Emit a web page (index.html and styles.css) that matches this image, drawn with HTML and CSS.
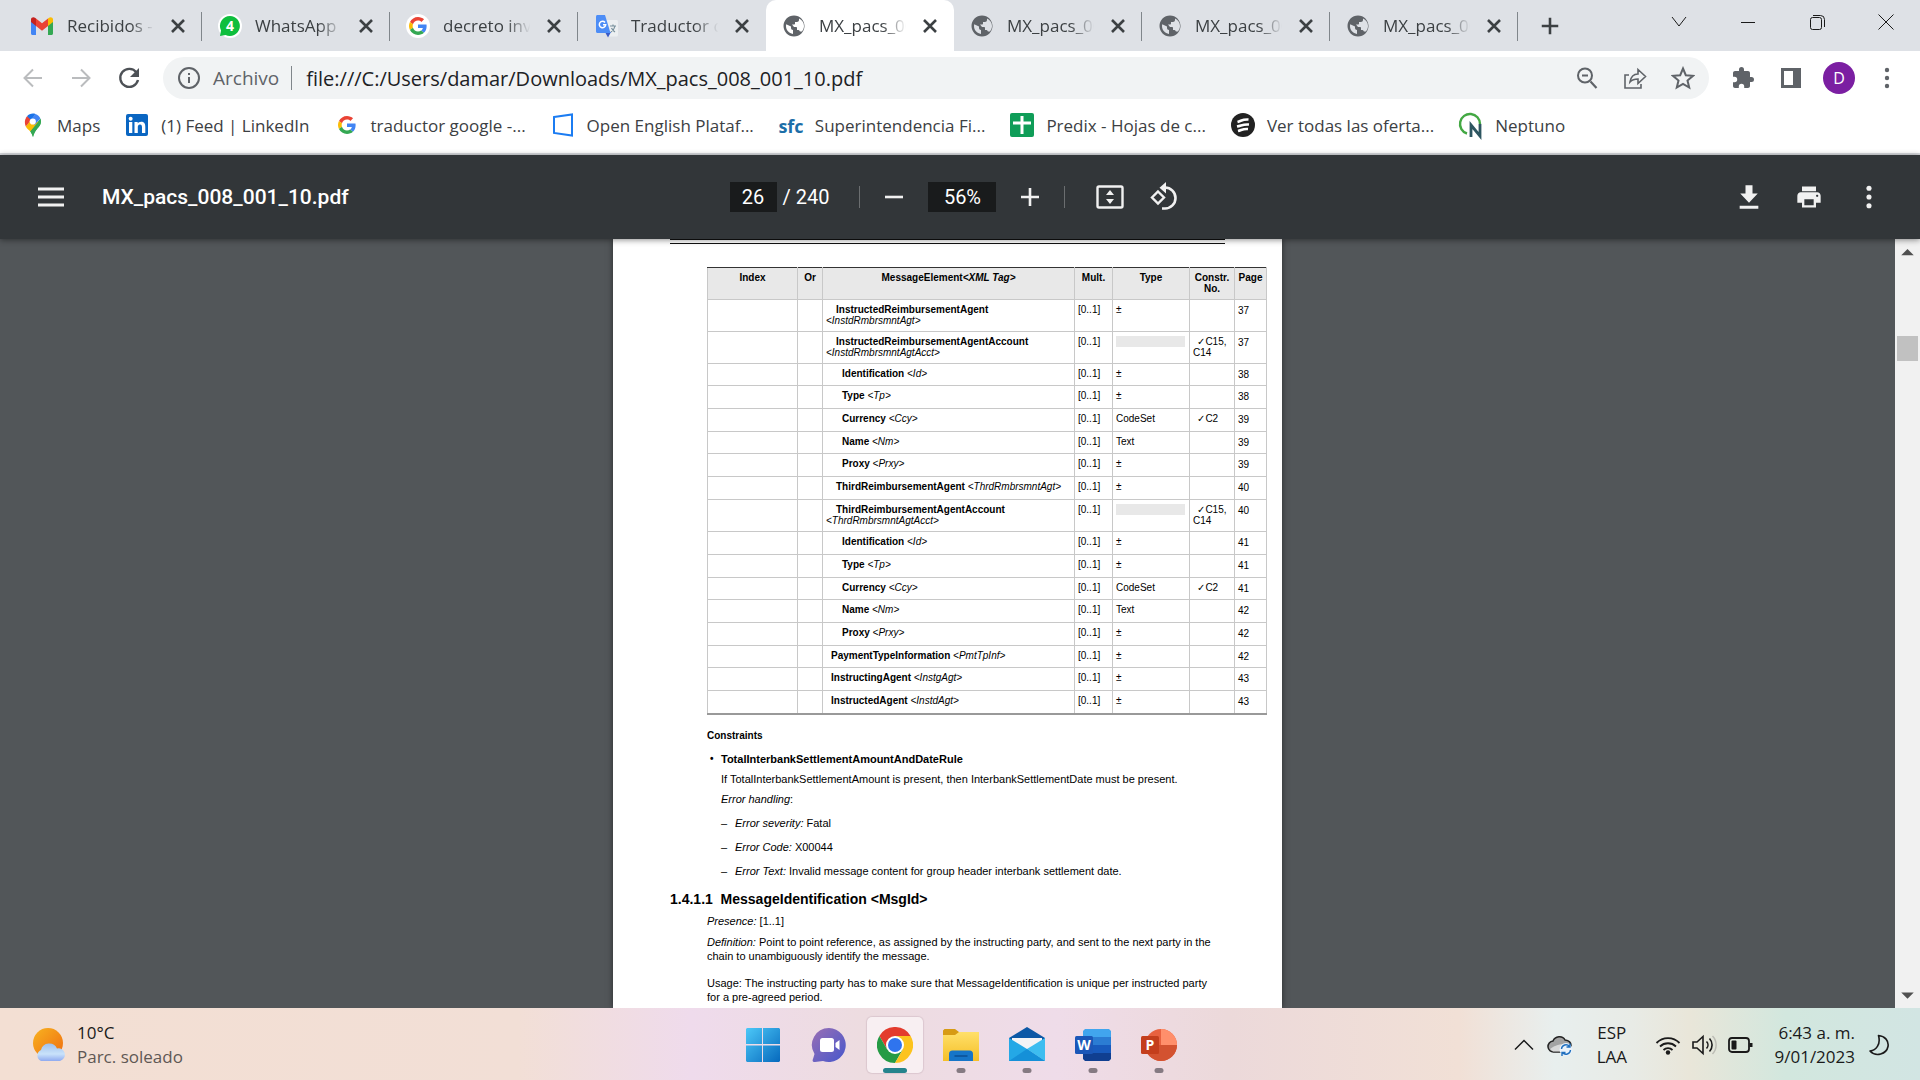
FILE: index.html
```html
<!DOCTYPE html>
<html lang="es">
<head>
<meta charset="utf-8">
<meta name="viewport" content="width=device-width, initial-scale=1">
<title>MX_pacs_008_001_10.pdf</title>
<link rel="stylesheet" href="styles.css">
</head>
<body>
<svg class="sprite" aria-hidden="true">
  <symbol id="x" viewBox="0 0 24 24"><path d="M6 6L18 18M18 6L6 18" fill="none" stroke="#3c4043" stroke-width="2.6"/></symbol>
  <symbol id="globe" viewBox="0 0 24 24"><path fill="#5f6368" d="M12 1.500C6.200 1.500 1.500 6.200 1.500 12s4.700 10.500 10.500 10.500 10.500-4.700 10.500-10.500S17.800 1.500 12 1.500zm-1 18.430c-3.950-.49-7-3.850-7-7.930 0-.62.080-1.210.210-1.790L9 12.500v1.500c0 1.100.9 2 2 2v3.930zm6.900-2.540c-.26-.81-1-1.390-1.900-1.390h-1v-2c0-.55-.45-1-1-1h-2l-2-2.500h2c.55 0 1-.45 1-1V8h2c1.100 0 2-.9 2-2v-1.410c2.930 1.190 5 4.060 5 7.410 0 2.080-.8 3.970-2.100 5.390z"/></symbol>
  <symbol id="google" viewBox="0 0 48 48"><path fill="#ea4335" d="M24 9.500c3.540 0 6.710 1.220 9.210 3.600l6.850-6.850C35.900 2.380 30.470 0 24 0 14.620 0 6.510 5.380 2.560 13.220l7.980 6.190C12.430 13.720 17.740 9.500 24 9.500z"/><path fill="#4285f4" d="M46.980 24.550c0-1.570-.15-3.090-.38-4.550H24v9.020h12.940c-.58 2.960-2.260 5.480-4.780 7.180l7.730 6c4.510-4.180 7.090-10.360 7.090-17.650z"/><path fill="#fbbc05" d="M10.530 28.590c-.48-1.450-.76-2.990-.76-4.590s.27-3.140.76-4.590l-7.980-6.190C.92 16.460 0 20.120 0 24c0 3.880.92 7.540 2.560 10.780l7.970-6.190z"/><path fill="#34a853" d="M24 48c6.480 0 11.930-2.130 15.890-5.810l-7.730-6c-2.150 1.450-4.920 2.300-8.160 2.300-6.260 0-11.570-4.220-13.470-9.910l-7.980 6.190C6.510 42.620 14.620 48 24 48z"/></symbol>
</svg>

<header class="browser">
  <div class="tabstrip">
    <div class="tabs">
      <div class="tab">
        <svg class="favicon" viewBox="0 0 24 24"><path fill="#4285f4" d="M1 5v14.500c0 .8.700 1.500 1.500 1.500H6V10z"/><path fill="#34a853" d="M18 10v11h3.500c.8 0 1.500-.7 1.500-1.500V5z"/><path fill="#ea4335" d="M6 4.500l6 4.700 6-4.700V12l-6 4.700L6 12z"/><path fill="#c5221f" d="M1 5.500C1 3.300 3.500 2.500 5 3.700l1 .8V12L1 8z"/><path fill="#fbbc04" d="M23 5.500c0-2.200-2.500-3-4-1.800l-1 .8V12l5-4z"/></svg>
        <span class="tab-title">Recibidos -</span><button class="tab-close" aria-label="Cerrar"><svg viewBox="0 0 24 24"><use href="#x"/></svg></button>
      </div>
      <div class="tab">
        <svg class="favicon" viewBox="0 0 24 24"><circle cx="12" cy="12" r="12" fill="#fff"/><path fill="#0ebe3d" d="M12 2a10 10 0 1 1-4.500 19L2 22l1-5.500A10 10 0 0 1 12 2z"/><text x="12" y="17" text-anchor="middle" class="badge-four">4</text></svg>
        <span class="tab-title">WhatsApp</span><button class="tab-close" aria-label="Cerrar"><svg viewBox="0 0 24 24"><use href="#x"/></svg></button>
      </div>
      <div class="tab">
        <svg class="favicon" viewBox="0 0 24 24"><circle cx="12" cy="12" r="12" fill="#fff"/><use href="#google" x="3" y="3" width="18" height="18"/></svg>
        <span class="tab-title">decreto inve</span><button class="tab-close" aria-label="Cerrar"><svg viewBox="0 0 24 24"><use href="#x"/></svg></button>
      </div>
      <div class="tab no-rule">
        <svg class="favicon" viewBox="0 0 24 24"><path fill="#eceff1" d="M12 6h10.500c.8 0 1.500.7 1.500 1.500V21c0 .8-.7 1.500-1.500 1.500H15z"/><path fill="#3a5bc7" d="M11 18h6l-3 5.500z"/><path fill="#4d8df6" d="M3.500 1H11l5.500 18h-13C2.600 19 2 18.400 2 17.500v-15C2 1.600 2.600 1 3.500 1z"/><path d="M11 8.500a3.200 3.200 0 1 0 .7 2.300H9" fill="none" stroke="#fff" stroke-width="1.500"/><path d="M16 12h6M19 10.500V12M21 12c-.5 3-2 4.500-4 6M17.500 14c1 2 2 3 3.500 4" fill="none" stroke="#78909c" stroke-width="1.200"/></svg>
        <span class="tab-title">Traductor d</span><button class="tab-close" aria-label="Cerrar"><svg viewBox="0 0 24 24"><use href="#x"/></svg></button>
      </div>
      <div class="tab active">
        <svg class="favicon" viewBox="0 0 24 24"><use href="#globe"/></svg>
        <span class="tab-title">MX_pacs_00</span><button class="tab-close" aria-label="Cerrar"><svg viewBox="0 0 24 24"><use href="#x"/></svg></button>
      </div>
      <div class="tab">
        <svg class="favicon" viewBox="0 0 24 24"><use href="#globe"/></svg>
        <span class="tab-title">MX_pacs_00</span><button class="tab-close" aria-label="Cerrar"><svg viewBox="0 0 24 24"><use href="#x"/></svg></button>
      </div>
      <div class="tab">
        <svg class="favicon" viewBox="0 0 24 24"><use href="#globe"/></svg>
        <span class="tab-title">MX_pacs_00</span><button class="tab-close" aria-label="Cerrar"><svg viewBox="0 0 24 24"><use href="#x"/></svg></button>
      </div>
      <div class="tab">
        <svg class="favicon" viewBox="0 0 24 24"><use href="#globe"/></svg>
        <span class="tab-title">MX_pacs_00</span><button class="tab-close" aria-label="Cerrar"><svg viewBox="0 0 24 24"><use href="#x"/></svg></button>
      </div>
      <button class="new-tab" aria-label="Nueva pestaña"><svg viewBox="0 0 24 24"><path d="M12 3v18M3 12h18" stroke="#3c4043" stroke-width="2.800"/></svg></button>
    </div>
    <div class="window-controls">
      <button aria-label="Buscar pestañas"><svg viewBox="0 0 20 20"><path d="M3 5l7 9 7-9"/></svg></button>
      <button aria-label="Minimizar"><svg viewBox="0 0 20 20"><path d="M3 10.500h14"/></svg></button>
      <button aria-label="Restaurar"><svg viewBox="0 0 20 20"><rect x="3.500" y="5.500" width="11" height="12" rx="2"/><path d="M6 3.500h7.500a4 4 0 0 1 4 4V15"/></svg></button>
      <button aria-label="Cerrar ventana"><svg viewBox="0 0 20 20"><path d="M2.500 2.500l15 15M17.500 2.500l-15 15"/></svg></button>
    </div>
  </div>

  <div class="navbar">
    <div class="nav-buttons">
      <button class="icon-btn" aria-label="Atrás"><svg viewBox="0 0 24 24"><path d="M21 12H4M12 3.500L3.500 12l8.500 8.500" fill="none" stroke="#babcbe" stroke-width="2"/></svg></button>
      <button class="icon-btn" aria-label="Adelante"><svg viewBox="0 0 24 24"><path d="M3 12h17M12 3.500l8.500 8.500-8.500 8.500" fill="none" stroke="#babcbe" stroke-width="2"/></svg></button>
      <button class="icon-btn" aria-label="Volver a cargar"><svg viewBox="0 0 24 24"><path d="M19.500 6.500A9 9 0 1 0 21 14" fill="none" stroke="#4d5156" stroke-width="2.400"/><path d="M22 2v9h-9z" fill="#4d5156"/></svg></button>
    </div>
    <div class="omnibox">
      <svg class="info" viewBox="0 0 24 24"><circle cx="12" cy="12" r="10" fill="none" stroke="#5f6368" stroke-width="2"/><path d="M12 11v6M12 7v2" stroke="#5f6368" stroke-width="2"/></svg>
      <label class="scheme" for="url">Archivo</label>
      <input id="url" class="url" type="text" value="file:///C:/Users/damar/Downloads/MX_pacs_008_001_10.pdf">
      <button class="icon-btn" aria-label="Zoom"><svg viewBox="0 0 24 24"><path d="M15.500 15.500L21.500 22M7 9.500h6" stroke="#5f6368" stroke-width="2.200"/><circle cx="10" cy="9.500" r="7" fill="none" stroke="#5f6368" stroke-width="2"/></svg></button>
      <button class="icon-btn" aria-label="Compartir"><svg viewBox="0 0 24 24"><path d="M6 9H2v13h16v-4M7 16c.8-5 4-8 8-8V3.500l7.500 7-7.500 7V13c-3.500 0-6 .8-8 3z" fill="none" stroke="#5f6368" stroke-width="1.600"/></svg></button>
      <button class="icon-btn" aria-label="Favorito"><svg viewBox="0 0 24 24"><path d="M12 2.500l2.800 6.700 7.200.6-5.500 4.700 1.700 7-6.200-3.700-6.200 3.700 1.700-7L2 9.800l7.200-.6z" fill="none" stroke="#5f6368" stroke-width="2"/></svg></button>
    </div>
    <div class="nav-buttons">
      <button class="icon-btn" aria-label="Extensiones"><svg viewBox="0 0 24 24"><path fill="#5f6368" d="M20.500 11H19V7c0-1.100-.9-2-2-2h-4V3.500a2.500 2.500 0 0 0-5 0V5H4c-1.100 0-2 .9-2 2v3.800h1.500a2.700 2.700 0 0 1 0 5.400H2V20c0 1.100.9 2 2 2h3.800v-1.500a2.700 2.700 0 0 1 5.400 0V22H17c1.100 0 2-.9 2-2v-4h1.500a2.500 2.500 0 0 0 0-5z"/></svg></button>
      <button class="icon-btn" aria-label="Panel lateral"><svg viewBox="0 0 24 24"><path fill="#5f6368" fill-rule="evenodd" d="M2 2h20v20H2zM5 5v14h9V5z"/></svg></button>
      <button class="icon-btn" aria-label="Perfil"><span class="avatar">D</span></button>
      <button class="icon-btn" aria-label="Menú"><svg viewBox="0 0 24 24" fill="#5f6368"><circle cx="12" cy="4" r="2.200"/><circle cx="12" cy="12" r="2.200"/><circle cx="12" cy="20" r="2.200"/></svg></button>
    </div>
  </div>

  <nav class="bookmarks">
    <a href="#maps"><svg viewBox="0 0 24 24"><path fill="#34a853" d="M19.400 5.500c1.500 4-.4 7.500-3.400 10.500-2 2-3.200 5-4 8-.8-2.500-1.700-4.300-2.700-5.500z"/><path fill="#fbbc04" d="M4.800 13.500L9 8l10 1-9.700 9.500c-1.500-1.500-3.500-3-4.500-5z"/><path fill="#34a853" d="M9.300 18.500L19.500 6c1.300 4-.5 7-3.500 10-2 2-3.200 5-4 8-.8-2.500-1.700-4.300-2.700-5.500z"/><path fill="#4285f4" d="M14.500 1c2.200.7 4 2.400 4.900 4.500L13.500 12 9 7z"/><path fill="#1a73e8" d="M6 3.200C8 .8 11.500 0 14.500 1L9 8z"/><path fill="#ea4335" d="M6 3.200L10 7l-5.200 6.500C3 9.500 4 5.800 6 3.200z"/><circle cx="11.800" cy="8.500" r="3.100" fill="#fff"/></svg><span>Maps</span></a>
    <a href="#linkedin"><svg viewBox="0 0 24 24"><rect x="1" y="1" width="22" height="22" rx="2" fill="#0a66c2"/><path fill="#fff" d="M4 9h3.300v11H4z"/><circle cx="5.650" cy="5.700" r="2" fill="#fff"/><path fill="#fff" d="M9.500 9h3.200v1.500c.6-1 1.800-1.800 3.500-1.800 3.300 0 4.100 2.100 4.100 5.200V20H17v-5.500c0-1.500-.2-3-2-3s-2.200 1.400-2.200 2.900V20H9.500z"/></svg><span>(1) Feed | LinkedIn</span></a>
    <a href="#traductor"><svg viewBox="0 0 24 24"><use href="#google" x="3" y="3" width="18" height="18"/></svg><span>traductor google -...</span></a>
    <a href="#openenglish"><svg viewBox="0 0 24 24"><path d="M3 4l18-2.500v21L3 20z" fill="none" stroke="#1b7cf2" stroke-width="2"/></svg><span>Open English Plataf...</span></a>
    <a href="#sfc"><svg viewBox="0 0 24 24"><text x="12" y="20" text-anchor="middle" class="sfc">sfc</text></svg><span>Superintendencia Fi...</span></a>
    <a href="#predix"><svg viewBox="0 0 24 24"><rect width="24" height="24" rx="2" fill="#0f9d58"/><path d="M12 3v18M3 10h18" stroke="#fff" stroke-width="3"/></svg><span>Predix - Hojas de c...</span></a>
    <a href="#ofertas"><svg viewBox="0 0 24 24"><circle cx="12" cy="12" r="12" fill="#222"/><path d="M6.500 9c4-1 5-3 11-2.500M6 13.500c5-1 6-2.500 12-2M7 18c4-1 5-2.500 10-2" fill="none" stroke="#fff" stroke-width="2.600"/></svg><span>Ver todas las oferta...</span></a>
    <a href="#neptuno"><svg viewBox="0 0 24 24"><path d="M8 20.500A10 10 0 1 1 21 11" fill="none" stroke="#43a843" stroke-width="2.400"/><path d="M12 24V12l9 11V11" fill="none" stroke="#2d5560" stroke-width="2.800"/></svg><span>Neptuno</span></a>
  </nav>
</header>

<section class="pdf-bar">
  <div class="pdf-left">
    <button class="menu" aria-label="Menú"><svg viewBox="0 0 26 20"><path d="M0 2h26M0 10h26M0 18h26" stroke="#f1f1f1" stroke-width="3"/></svg></button>
    <span class="pdf-title">MX_pacs_008_001_10.pdf</span>
  </div>
  <div class="pdf-center">
    <input class="box page-no" type="text" value="26" aria-label="Página">
    <span class="page-total">/ 240</span>
    <span class="rule"></span>
    <button class="pdf-btn" aria-label="Alejar"><svg viewBox="0 0 24 24"><path d="M3 12h18" stroke="#f1f1f1" stroke-width="2.600"/></svg></button>
    <input class="box zoom-no" type="text" value="56%" aria-label="Nivel de zoom">
    <button class="pdf-btn" aria-label="Acercar"><svg viewBox="0 0 24 24"><path d="M3 12h18M12 3v18" stroke="#f1f1f1" stroke-width="2.600"/></svg></button>
    <span class="rule"></span>
    <button class="pdf-btn wide" aria-label="Ajustar a la página"><svg viewBox="0 0 30 30"><rect x="2.500" y="4.500" width="25" height="21" rx="1.500" fill="none" stroke="#f1f1f1" stroke-width="2.400"/><path fill="#f1f1f1" d="M15 8l4 5h-8zM15 22l4-5h-8z"/></svg></button>
    <button class="pdf-btn wide" aria-label="Girar"><svg viewBox="0 0 30 30"><path d="M9 9.500L15 15.500 9 21.500 3 15.500z" fill="none" stroke="#f1f1f1" stroke-width="2.400"/><path d="M13 5.500h3a10.500 10.500 0 0 1 0 21h-3" fill="none" stroke="#f1f1f1" stroke-width="2.600"/><path fill="#f1f1f1" d="M17 0v11.500L10.500 5.700z"/></svg></button>
  </div>
  <div class="pdf-right">
    <button class="pdf-act" aria-label="Descargar"><svg viewBox="0 0 24 24"><path fill="#f1f1f1" d="M19.500 9H15V2H9v7H4.500L12 17zM4 19.500V22h16v-2.500z"/></svg></button>
    <button class="pdf-act" aria-label="Imprimir"><svg viewBox="0 0 24 24"><path fill="#f1f1f1" fill-rule="evenodd" d="M19 8H5c-1.660 0-3 1.340-3 3v6h4v4h12v-4h4v-6c0-1.660-1.340-3-3-3zm-3 11H8v-5h8v5zm3-7c-.55 0-1-.45-1-1s.45-1 1-1 1 .45 1 1-.45 1-1 1zM18 3H6v4h12z"/></svg></button>
    <button class="pdf-act" aria-label="Más opciones"><svg viewBox="0 0 24 24" fill="#f1f1f1"><circle cx="12" cy="4.500" r="2.200"/><circle cx="12" cy="12" r="2.200"/><circle cx="12" cy="19.500" r="2.200"/></svg></button>
  </div>
</section>

<main class="viewer">
  <div class="canvas">
    <article class="page">
      <div class="page-head"></div>
      <div class="indent">
        <table class="elements">
          <colgroup><col class="c-index"><col class="c-or"><col class="c-element"><col class="c-mult"><col class="c-type"><col class="c-constr"><col class="c-page"></colgroup>
          <thead><tr><th>Index</th><th>Or</th><th>MessageElement<i>&lt;XML Tag&gt;</i></th><th>Mult.</th><th>Type</th><th>Constr. No.</th><th>Page</th></tr></thead>
          <tbody>
            <tr class="tall"><td></td><td></td><td class="l2"><b>InstructedReimbursementAgent</b><br><i>&lt;InstdRmbrsmntAgt&gt;</i></td><td>[0..1]</td><td>±</td><td></td><td>37</td></tr>
            <tr class="tall"><td></td><td></td><td class="l2"><b>InstructedReimbursementAgentAccount</b><br><i>&lt;InstdRmbrsmntAgtAcct&gt;</i></td><td>[0..1]</td><td><span class="blank"></span></td><td><span class="check">✓</span>C15, C14</td><td>37</td></tr>
            <tr><td></td><td></td><td class="l3"><b>Identification</b> <i>&lt;Id&gt;</i></td><td>[0..1]</td><td>±</td><td></td><td>38</td></tr>
            <tr><td></td><td></td><td class="l3"><b>Type</b> <i>&lt;Tp&gt;</i></td><td>[0..1]</td><td>±</td><td></td><td>38</td></tr>
            <tr><td></td><td></td><td class="l3"><b>Currency</b> <i>&lt;Ccy&gt;</i></td><td>[0..1]</td><td>CodeSet</td><td><span class="check">✓</span>C2</td><td>39</td></tr>
            <tr><td></td><td></td><td class="l3"><b>Name</b> <i>&lt;Nm&gt;</i></td><td>[0..1]</td><td>Text</td><td></td><td>39</td></tr>
            <tr><td></td><td></td><td class="l3"><b>Proxy</b> <i>&lt;Prxy&gt;</i></td><td>[0..1]</td><td>±</td><td></td><td>39</td></tr>
            <tr><td></td><td></td><td class="l2"><b>ThirdReimbursementAgent</b> <i>&lt;ThrdRmbrsmntAgt&gt;</i></td><td>[0..1]</td><td>±</td><td></td><td>40</td></tr>
            <tr class="tall"><td></td><td></td><td class="l2"><b>ThirdReimbursementAgentAccount</b><br><i>&lt;ThrdRmbrsmntAgtAcct&gt;</i></td><td>[0..1]</td><td><span class="blank"></span></td><td><span class="check">✓</span>C15, C14</td><td>40</td></tr>
            <tr><td></td><td></td><td class="l3"><b>Identification</b> <i>&lt;Id&gt;</i></td><td>[0..1]</td><td>±</td><td></td><td>41</td></tr>
            <tr><td></td><td></td><td class="l3"><b>Type</b> <i>&lt;Tp&gt;</i></td><td>[0..1]</td><td>±</td><td></td><td>41</td></tr>
            <tr><td></td><td></td><td class="l3"><b>Currency</b> <i>&lt;Ccy&gt;</i></td><td>[0..1]</td><td>CodeSet</td><td><span class="check">✓</span>C2</td><td>41</td></tr>
            <tr><td></td><td></td><td class="l3"><b>Name</b> <i>&lt;Nm&gt;</i></td><td>[0..1]</td><td>Text</td><td></td><td>42</td></tr>
            <tr><td></td><td></td><td class="l3"><b>Proxy</b> <i>&lt;Prxy&gt;</i></td><td>[0..1]</td><td>±</td><td></td><td>42</td></tr>
            <tr><td></td><td></td><td class="l1"><b>PaymentTypeInformation</b> <i>&lt;PmtTpInf&gt;</i></td><td>[0..1]</td><td>±</td><td></td><td>42</td></tr>
            <tr><td></td><td></td><td class="l1"><b>InstructingAgent</b> <i>&lt;InstgAgt&gt;</i></td><td>[0..1]</td><td>±</td><td></td><td>43</td></tr>
            <tr><td></td><td></td><td class="l1"><b>InstructedAgent</b> <i>&lt;InstdAgt&gt;</i></td><td>[0..1]</td><td>±</td><td></td><td>43</td></tr>
          </tbody>
        </table>
        <h3 class="constraints">Constraints</h3>
        <ul class="rules">
          <li>
            <b class="rule-name">TotalInterbankSettlementAmountAndDateRule</b>
            <p>If TotalInterbankSettlementAmount is present, then InterbankSettlementDate must be present.</p>
            <p><i>Error handling</i>:</p>
            <ul class="errors">
              <li><i>Error severity:</i> Fatal</li>
              <li><i>Error Code:</i> X00044</li>
              <li><i>Error Text:</i> Invalid message content for group header interbank settlement date.</li>
            </ul>
          </li>
        </ul>
      </div>
      <h2 class="section">1.4.1.1&nbsp; MessageIdentification &lt;MsgId&gt;</h2>
      <div class="indent prose">
        <p><i>Presence:</i> [1..1]</p>
        <p><i>Definition:</i> Point to point reference, as assigned by the instructing party, and sent to the next party in the<br>chain to unambiguously identify the message.</p>
        <p class="usage">Usage: The instructing party has to make sure that MessageIdentification is unique per instructed party<br>for a pre-agreed period.</p>
      </div>
    </article>
  </div>
  <div class="scrollbar">
    <svg viewBox="0 0 24 24"><path fill="#505050" d="M12 9.500l6 6H6z"/></svg>
    <div class="track"><div class="thumb"></div></div>
    <svg viewBox="0 0 24 24"><path fill="#505050" d="M12 15l6-6H6z"/></svg>
  </div>
</main>

<footer class="taskbar">
  <div class="weather">
    <svg viewBox="0 0 36 36">
      <defs>
        <linearGradient id="sun" x1="0" y1="0" x2="1" y2="1"><stop offset="0" stop-color="#f8b320"/><stop offset="1" stop-color="#ef6c10"/></linearGradient>
        <linearGradient id="cloud" x1="0" y1="0" x2="0" y2="1"><stop offset="0" stop-color="#9fc0ec"/><stop offset=".6" stop-color="#c9e2fa"/><stop offset="1" stop-color="#8faaf0"/></linearGradient>
      </defs>
      <circle cx="16" cy="16" r="15" fill="url(#sun)"/><path fill="url(#cloud)" d="M9 34a6 6 0 0 1 0-11 8.500 8.500 0 0 1 16-1.500A6.300 6.300 0 0 1 28 34z"/></svg>
    <div><div class="temp">10°C</div><div class="cond">Parc. soleado</div></div>
  </div>
  <div class="apps">
    <button aria-label="Inicio"><svg viewBox="0 0 36 36"><defs><linearGradient id="win" x1="0" y1="0" x2="1" y2="1"><stop offset="0" stop-color="#4cc8f8"/><stop offset="1" stop-color="#0669bd"/></linearGradient></defs><path fill="url(#win)" d="M2 1h15v16H1V2zM18 1h16l1 1v15H18zM1 18.500h16V35H2l-1-1zM18 18.500h17V34l-1 1H18z"/></svg></button>
    <button aria-label="Chat"><svg viewBox="0 0 36 36"><defs><linearGradient id="chat" x1="0" y1="0" x2="1" y2="1"><stop offset="0" stop-color="#9a6fb4"/><stop offset="1" stop-color="#4657cc"/></linearGradient></defs><path fill="url(#chat)" d="M18 1a17 17 0 1 1-6 33l-8 1c-2 0-3-1-2-3l1.500-5A17 17 0 0 1 18 1z"/><rect x="9" y="11" width="14" height="14" rx="2.500" fill="#fff"/><path fill="#fff" d="M24.500 16l4-3v10l-4-3z"/></svg></button>
    <button class="current" aria-label="Chrome"><svg viewBox="0 0 36 36"><path fill="#e33b2e" d="M2.400 9A18 18 0 0 1 33.600 9L26 14H18z"/><path fill="#e33b2e" d="M2.400 9L10.200 22.500 18 18l15.600-9z"/><path fill="#259b45" d="M2.400 9A18 18 0 0 0 18 36l7.800-13.500L18 18l-7.800 4.500z"/><path fill="#fcc31e" d="M33.600 9A18 18 0 0 1 18 36l7.800-13.500L18 18V9z"/><circle cx="18" cy="18" r="9" fill="#fff"/><circle cx="18" cy="18" r="7" fill="#2f74ee"/></svg></button>
    <button class="open" aria-label="Explorador"><svg viewBox="0 0 36 36"><defs><linearGradient id="fold" x1="0" y1="0" x2="0" y2="1"><stop offset="0" stop-color="#ffe06a"/><stop offset="1" stop-color="#f5bf28"/></linearGradient></defs><path fill="#d79b14" d="M1.500 2H12l4 3h18l2 2v6H0V3.500z"/><path fill="url(#fold)" d="M0 8h12l4-3h20v29H0z"/><path fill="#1675c8" d="M6 34v-7a3.500 3.500 0 0 1 3.500-3.500h17A3.500 3.500 0 0 1 30 27v7z"/><path d="M11.500 29h13" stroke="#0b4f94" stroke-width="1.500"/></svg></button>
    <button class="open" aria-label="Correo"><svg viewBox="0 0 36 36"><path fill="#0c58a6" d="M0 11L18 0l18 11v6H0z"/><path fill="#f4f4f6" d="M3 11h30v7L18 27 3 18z"/><path fill="#24a8e6" d="M0 11l18 11 18 12H0z"/><path fill="#3dbdf0" d="M36 11v23L18 22z"/><path fill="#1590d8" d="M0 34h36L18 22z"/></svg></button>
    <button class="open" aria-label="Word"><svg viewBox="0 0 36 36"><path fill="#41a5ee" d="M10 2h24l2 2v6H8V4z"/><path fill="#2b7cd3" d="M8 10h28v8H8z"/><path fill="#185abd" d="M8 18h28v8H8z"/><path fill="#103f91" d="M8 26h28v6l-2 2H10l-2-2z"/><rect y="9" width="18" height="18" rx="1.500" fill="#1b57b8"/><text x="9" y="23" text-anchor="middle" class="app-letter">W</text></svg></button>
    <button class="open" aria-label="PowerPoint"><svg viewBox="0 0 36 36"><circle cx="20" cy="18" r="16" fill="#e8613f"/><path fill="#ff8f6b" d="M20 2a16 16 0 0 1 16 16H20z"/><path fill="#d35230" d="M4 18h32a16 16 0 0 1-32 0z"/><rect y="9" width="18" height="18" rx="1.500" fill="#c43e1c"/><text x="9" y="23" text-anchor="middle" class="app-letter">P</text></svg></button>
  </div>
  <div class="tray">
    <svg class="chev" viewBox="0 0 20 20"><path d="M1 14.500l9-9 9 9" fill="none" stroke="#1a1a1a" stroke-width="1.500"/></svg>
    <svg class="onedrive" viewBox="0 0 26 26"><path d="M7 20a5.500 5.500 0 0 1-1-11C8 4 15.500 3 18 8c4 .5 6 3 6 5.500 0 4-2 6.500-5 6.500z" fill="#a3a3a3" stroke="#222" stroke-width="1.500"/><path d="M3 17c5-4 10-5 17-5l-2 7.500H6z" fill="#d8d8d8"/><circle cx="19" cy="17.500" r="6.500" fill="#eaf2fa"/><path d="M14.500 17a4.500 4.500 0 0 1 8-2.500M23.500 18a4.500 4.500 0 0 1-8 2.500M23 11.500v3.500h-3.500M15 24v-3.500h3.500" fill="none" stroke="#1f6fbf" stroke-width="1.400"/></svg>
    <div class="lang">ESP<br>LAA</div>
    <svg class="sys" viewBox="0 0 26 26"><g fill="none" stroke="#1a1a1a" stroke-width="1.800"><path d="M1.500 11a16 16 0 0 1 23 0M5 14.500a11.500 11.500 0 0 1 16 0M8.500 18a6.500 6.500 0 0 1 9 0"/></g><circle cx="13" cy="20.500" r="2.200" fill="#1a1a1a"/></svg>
    <svg class="sys" viewBox="0 0 26 26"><g fill="none" stroke="#1a1a1a" stroke-width="1.600"><path d="M2 10h4l6-5.500v17L6 16H2z"/><path d="M15.500 9.500a5 5 0 0 1 0 7M18.500 6.500a9.500 9.500 0 0 1 0 13"/></g><path d="M21.500 4a13 13 0 0 1 0 18" fill="none" stroke="#bcbcb4" stroke-width="1.500"/></svg>
    <svg class="sys" viewBox="0 0 26 26"><rect x="2" y="6" width="20" height="14" rx="3" fill="none" stroke="#1a1a1a" stroke-width="1.800"/><rect x="4.500" y="8.500" width="5" height="9" rx="1" fill="#1a1a1a"/><path d="M24 11v4" stroke="#1a1a1a" stroke-width="3"/></svg>
    <div class="clock">6:43 a. m.<br>9/01/2023</div>
    <svg class="moon" viewBox="0 0 22 22"><path d="M10.500 1.500C17 2 21 7 20 12.500 18.500 20 8 23.500 2 17c6-.5 11-6.500 8.500-15.500z" fill="none" stroke="#1a1a1a" stroke-width="1.600" stroke-linejoin="round"/></svg>
  </div>
</footer>
</body>
</html>
```
FILE: styles.css
```css
* { box-sizing: border-box; }

body {
  margin: 0;
  height: 100vh;
  display: flex;
  flex-direction: column;
  overflow: hidden;
  font-family: "Open Sans", "Noto Sans", sans-serif;
  font-size: 17px;
  color: #3c4043;
}

button, input {
  font: inherit;
  color: inherit;
  border: 0;
  padding: 0;
  background: none;
}

svg { display: block; flex: none; }
.sprite { position: absolute; width: 0; height: 0; }

/* Tab strip */
.tabstrip {
  display: flex;
  justify-content: space-between;
  height: 51px;
  background: #dee1e6;
}
.tabs { display: flex; padding-left: 14px; min-width: 0; }
.tab {
  position: relative;
  display: flex;
  align-items: center;
  width: 188px;
  padding: 0 12px 0 16px;
}
.tab::after {
  content: "";
  position: absolute;
  right: 0;
  top: 12px;
  width: 1px;
  height: 29px;
  background: #80868b;
}
.tab.no-rule::after, .tab.active::after { display: none; }
.tab.active { background: #fff; border-radius: 10px 10px 0 0; }
.favicon { width: 24px; height: 24px; }
.tab-title {
  flex: 1;
  margin: 0 6px 0 13px;
  overflow: hidden;
  white-space: nowrap;
  mask-image: linear-gradient(to right, #000 68%, transparent 94%);
}
.tab-close { width: 24px; height: 24px; }
.tab-close svg { width: 24px; height: 24px; }
.new-tab { width: 64px; display: grid; place-items: center; }
.new-tab svg { width: 22px; height: 22px; }
.window-controls { display: flex; height: 44px; }
.window-controls button { width: 69px; display: grid; place-items: center; }
.window-controls svg { width: 20px; height: 20px; fill: none; stroke: #1a1a1a; stroke-width: 1; }
.badge-four { font: bold 14px "Open Sans", sans-serif; fill: #fff; }

/* Address bar */
.navbar {
  display: flex;
  align-items: center;
  height: 54px;
  padding: 0 9px;
  background: #fff;
}
.nav-buttons { display: flex; }
.icon-btn { width: 48px; height: 42px; display: grid; place-items: center; }
.icon-btn svg { width: 24px; height: 24px; }
.omnibox {
  flex: 1;
  display: flex;
  align-items: center;
  height: 42px;
  margin: 0 10px;
  padding: 0 2px 0 14px;
  border-radius: 21px;
  background: #f1f3f4;
  font-size: 20px;
}
.info { width: 24px; height: 24px; margin-right: 12px; }
.scheme {
  padding-right: 12px;
  border-right: 1px solid #80868b;
  line-height: 24px;
  color: #5f6368;
  font-size: 19px;
}
.url { flex: 1; min-width: 0; margin-left: 14px; color: #202124; }
.avatar {
  display: grid;
  place-items: center;
  width: 32px;
  height: 32px;
  border-radius: 50%;
  background: #7b1fa2;
  color: #fff;
  font-size: 16px;
}

.bookmarks {
  display: flex;
  align-items: center;
  gap: 25px;
  height: 50px;
  padding: 0 21px 8px;
  background: #fff;
  border-bottom: 2px solid #dadce0;
}
.bookmarks a {
  display: flex;
  align-items: center;
  gap: 12px;
  color: inherit;
  text-decoration: none;
  white-space: nowrap;
}
.bookmarks svg { width: 24px; height: 24px; overflow: visible; }
.sfc { font: bold 18px "Open Sans", sans-serif; fill: #1c6ea8; }

/* PDF toolbar */
.pdf-bar {
  position: relative;
  z-index: 1;
  display: grid;
  grid-template-columns: 1fr auto 1fr;
  align-items: center;
  height: 84px;
  padding: 0 21px 0 38px;
  background: #323639;
  box-shadow: 0 1px 6px rgba(0, 0, 0, .45);
  color: #fff;
  font-family: Roboto, sans-serif;
  font-size: 20px;
}
.pdf-left { display: flex; align-items: center; gap: 38px; }
.menu svg { width: 26px; height: 20px; }
.pdf-title { font-weight: 500; font-size: 21px; }
.pdf-center { display: flex; align-items: center; padding-right: 34px; }
.box { height: 30px; background: #191b1c; text-align: center; }
.page-no { width: 47px; }
.zoom-no { width: 68px; }
.page-total { margin: 0 30px 0 6px; }
.rule { width: 1px; height: 22px; background: #6b6e70; }
.pdf-btn { width: 24px; height: 24px; margin: 0 22px; }
.pdf-btn svg { width: 24px; height: 24px; }
.pdf-btn.wide { width: 30px; height: 30px; margin: 0 -6px 0 30px; }
.pdf-btn.wide svg { width: 30px; height: 30px; }
.pdf-right { display: flex; justify-content: flex-end; }
.pdf-act { width: 60px; height: 40px; display: grid; place-items: center; }
.pdf-act svg { width: 28px; height: 28px; }

/* Document viewer */
.viewer { flex: 1; display: flex; min-height: 0; background: #525659; }
.canvas { flex: 1; min-width: 0; overflow: hidden; }
.page {
  width: 669px;
  height: 100%;
  margin: 0 auto;
  padding-left: 57px;
  overflow: hidden;
  background: #fff;
  box-shadow: 0 0 6px rgba(0, 0, 0, .5);
  color: #000;
  font: 11px/14px "Liberation Sans", Arial, sans-serif;
}
.page-head {
  width: 555px;
  height: 5px;
  margin-bottom: 23px;
  border: solid #111;
  border-width: 1px 0;
}
.indent { padding-left: 37px; }

.elements {
  width: 559px;
  table-layout: fixed;
  border-collapse: collapse;
  border-top: 1px solid #333;
  border-bottom: 2px solid #999;
  font-size: 10px;
  line-height: 11px;
}
.c-index { width: 90px; }
.c-or { width: 25px; }
.c-element { width: 252px; }
.c-mult { width: 38px; }
.c-type { width: 77px; }
.c-constr { width: 45px; }
.c-page { width: 32px; }
.elements th, .elements td {
  height: 23px;
  border: 1px solid #c8c8c8;
  padding: 4px 2px 0 3px;
  vertical-align: top;
  text-align: left;
}
.elements th {
  height: 32px;
  background: #e8e8e8;
  border-top-color: #333;
  padding: 4px 0 0;
  text-align: center;
}
.elements tr:nth-child(3n) td { height: 22px; }
.elements tr.tall td { height: 32px; }
.elements tr:last-child td { border-bottom: 2px solid #999; }
.elements td:last-child { padding-top: 5px; }
.elements b { white-space: nowrap; }
.l1 b { margin-left: 5px; }
.l2 b { margin-left: 10px; }
.l3 b { margin-left: 16px; }
.elements .l2 { padding-right: 0; white-space: nowrap; }
.blank { display: block; height: 11px; margin-right: 2px; background: #e8e8e8; }
.check {
  display: inline-block;
  height: 11px;
  margin-left: 4px;
  overflow: hidden;
  vertical-align: top;
  font-family: "DejaVu Sans", sans-serif;
}

.constraints { margin: 14px 0 10px; font-size: 10px; line-height: 13px; }
.rules, .errors { list-style: none; margin: 0; padding: 0; }
.rules > li { padding-left: 14px; }
.rule-name { display: flex; margin-left: -11px; }
.rule-name::before { content: "•"; width: 11px; font-size: 10px; }
.rules p { margin: 6px 0 0; }
.errors { padding-top: 10px; }
.errors li { padding-left: 14px; margin-bottom: 10px; line-height: 14px; }
.errors li::before { content: "–"; display: inline-block; width: 14px; margin-left: -14px; }
.section { margin: 12px 0 6px; font-size: 14px; line-height: 18px; }
.prose p { margin: 0 0 7px; white-space: nowrap; }
.prose .usage { margin-top: 13px; }

.scrollbar {
  display: flex;
  flex-direction: column;
  width: 25px;
  background: #f1f1f1;
}
.scrollbar svg { width: 25px; height: 25px; }
.track { flex: 1; padding: 72px 2px 0; }
.thumb { height: 25px; background: #c1c1c1; }

/* Taskbar */
.taskbar {
  display: grid;
  grid-template-columns: 1fr auto 1fr;
  align-items: center;
  height: 72px;
  padding: 2px 30px 0 32px;
  background: linear-gradient(to right, #f3dfd3 0%, #f2dfd6 27%, #efdbec 36%, #eddce0 45%, #efdce9 55%, #ecd9da 64%, #f1e0d6 76%, #e8efee 81%, #e8ebe6 85%, #e9e6d9 88%, #d2e7de 93%, #d2e5e3 100%);
  color: #1a1a1a;
  line-height: 24px;
}
.weather { display: flex; align-items: center; gap: 9px; }
.weather svg { width: 36px; height: 36px; }
.cond { color: #5f5854; }
.apps { display: flex; gap: 10px; }
.apps button {
  position: relative;
  width: 56px;
  height: 56px;
  display: grid;
  place-items: center;
  border-radius: 5px;
}
.apps svg { width: 36px; height: 36px; }
.apps .current { background: #f8eff2; box-shadow: 0 0 1px 1px rgba(120, 90, 110, .15); }
.apps .current::after, .apps .open::after {
  content: "";
  position: absolute;
  bottom: 0;
  left: 50%;
  translate: -50% 0;
  width: 9px;
  height: 5px;
  border-radius: 3px;
  background: #857a82;
}
.apps .current::after { width: 24px; background: #24838c; }
.app-letter { font: bold 14px "Open Sans", sans-serif; fill: #fff; }
.tray { display: flex; align-items: center; justify-content: flex-end; }
.chev { width: 20px; height: 20px; }
.onedrive { width: 26px; height: 26px; margin: 0 24px 0 13px; }
.lang { text-align: center; }
.sys { width: 26px; height: 26px; margin-right: 10px; }
.lang + .sys { margin-left: 28px; }
.clock { width: 92px; text-align: right; white-space: nowrap; }
.moon { width: 22px; height: 22px; margin-left: 13px; }
```
